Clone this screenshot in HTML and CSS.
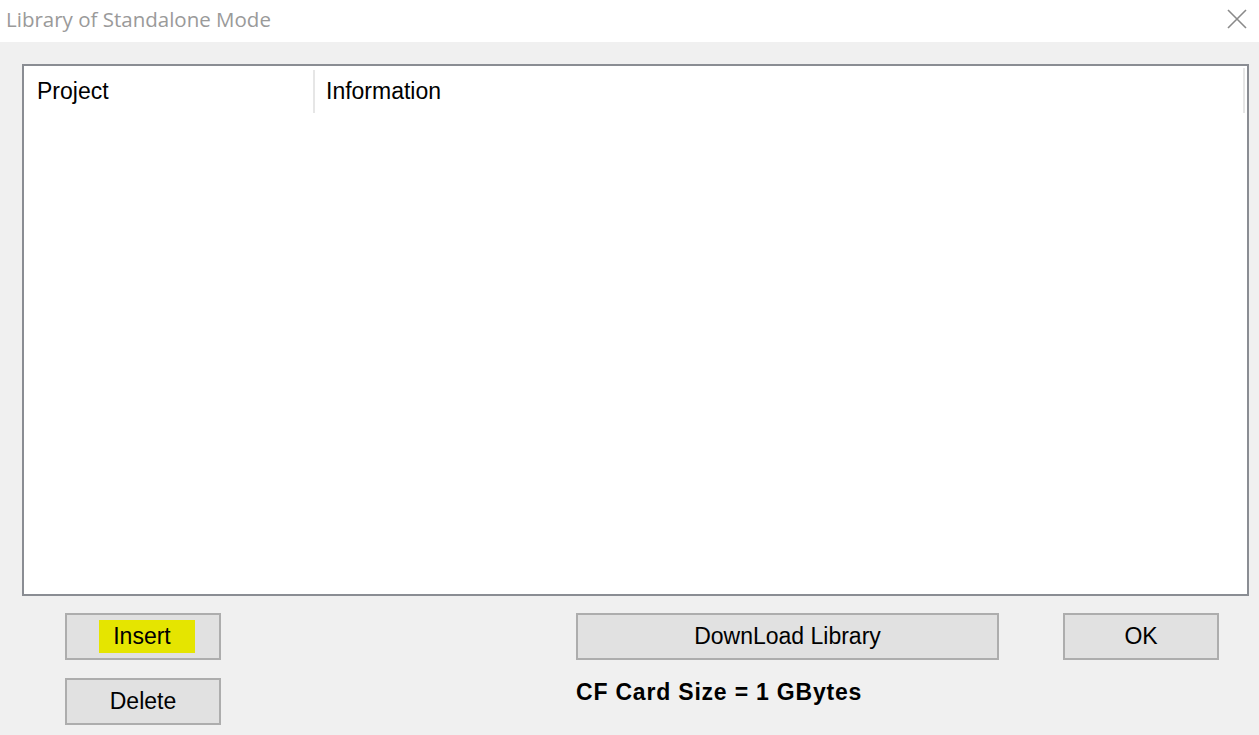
FILE: index.html
```html
<!DOCTYPE html>
<html>
<head>
<meta charset="utf-8">
<link rel="stylesheet" href="styles.css">
</head>
<body>
<div class="window">
  <div class="titlebar">
    <span class="title">Library of Standalone Mode</span>
    <svg class="close" width="20" height="20" viewBox="0 0 20 20"><path d="M1 1 L19 19 M19 1 L1 19" stroke="#8a8a8a" stroke-width="1.6" fill="none"/></svg>
  </div>
  <div class="body">
    <div class="listbox">
      <div class="header">
        <div class="col col-project">Project</div>
        <div class="col col-info">Information</div>
      </div>
    </div>
    <div class="controls">
      <div class="left-col">
        <button class="btn"><span class="hl">Insert</span></button>
        <button class="btn">Delete</button>
      </div>
      <div class="mid-col">
        <button class="btn wide">DownLoad Library</button>
        <div class="cf">CF Card Size = 1 GBytes</div>
      </div>
      <div class="right-col">
        <button class="btn">OK</button>
      </div>
    </div>
  </div>
</div>
</body>
</html>
```

FILE: styles.css
```css
html, body {
  margin: 0;
  padding: 0;
}
body {
  width: 1259px;
  height: 735px;
  overflow: hidden;
  background: #f0f0f0;
  font-family: "Liberation Sans", Arial, sans-serif;
}
.window {
  display: flex;
  flex-direction: column;
  height: 735px;
}
.titlebar {
  height: 42px;
  background: #ffffff;
  display: flex;
  align-items: center;
  justify-content: space-between;
  padding: 0 12px 0 6px;
  box-sizing: border-box;
}
.title {
  font-family: "Open Sans", "Noto Sans", sans-serif;
  font-size: 20.5px;
  color: #9a9a9a;
  margin-top: -4px;
}
.close {
  margin-top: -4px;
}
.body {
  flex: 1;
  padding: 22px 10px 0 22px;
  display: flex;
  flex-direction: column;
}
.listbox {
  height: 532px;
  box-sizing: border-box;
  border: 2px solid #8a8d93;
  background: #ffffff;
  padding: 2px 2px 0 0;
}
.header {
  display: flex;
  height: 43px;
  padding-top: 2px;
  border-right: 2px solid #e6e6e6;
}
.col {
  font-size: 23px;
  color: #000;
  display: flex;
  align-items: center;
  padding-left: 13px;
  box-sizing: border-box;
}
.col-project {
  width: 291px;
  border-right: 2px solid #e6e6e6;
}
.col-info {
  flex: 1;
  padding-left: 11px;
}
.controls {
  display: flex;
  margin-top: 17px;
  padding-left: 43px;
}
.left-col {
  display: flex;
  flex-direction: column;
  gap: 18px;
  width: 156px;
}
.btn {
  width: 156px;
  height: 47px;
  box-sizing: border-box;
  border: 2px solid #adadad;
  background: #e1e1e1;
  font-family: "Liberation Sans", Arial, sans-serif;
  font-size: 23px;
  color: #000;
  padding: 0;
  display: flex;
  align-items: center;
  justify-content: center;
}
.hl {
  background: #e5e500;
  padding: 3px 24px 3px 14px;
  margin-left: 8px;
}
.mid-col {
  margin-left: 355px;
  width: 423px;
  display: flex;
  flex-direction: column;
}
.wide {
  width: 423px;
}
.cf {
  font-weight: bold;
  font-size: 23px;
  letter-spacing: 0.8px;
  color: #000;
  margin-top: 19px;
}
.right-col {
  margin-left: 64px;
}
```
